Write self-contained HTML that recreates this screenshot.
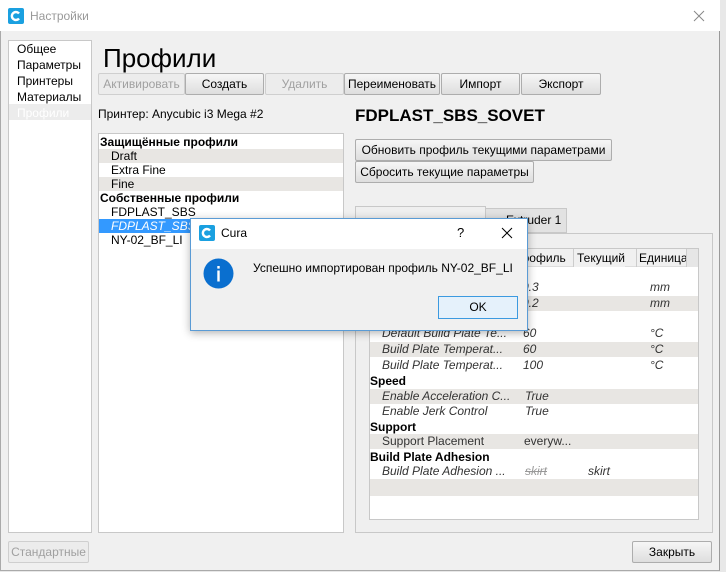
<!DOCTYPE html>
<html><head><meta charset="utf-8"><style>
*{box-sizing:border-box;margin:0;padding:0}
body{width:726px;height:572px;background:#e8e8e8;font-family:"Liberation Sans","DejaVu Sans",sans-serif;font-size:12px;color:#000;position:relative;overflow:hidden}
.a{position:absolute}
.win{left:0;top:0;width:720px;height:571px;background:#f0f0f0;border:1px solid #aaa;border-right:1px solid #999}
.tb{left:0;top:0;width:720px;height:31px;background:#fff}
.btn{position:absolute;height:22px;border:1px solid #adadad;background:linear-gradient(#f6f6f6,#dedede);border-radius:2px;text-align:center;line-height:20px;font-size:12px}
.dis{color:#a0a0a0;border-color:#cfcfcf;background:#ececec}
.row{position:absolute;left:0;width:100%;height:14px;line-height:14px;white-space:nowrap}
.g{background:#e8e6e3}
.it{font-style:italic;color:#333}
.tr{position:absolute;left:0;width:329px;height:15px;line-height:15px;white-space:nowrap}
.tr span{position:absolute}
</style></head><body>
<div class="a win"></div>
<div class="a tb"></div>
<svg class="a" style="left:8px;top:8px" width="16" height="16"><rect width="16" height="16" rx="2" fill="#1aa0e0"/><path d="M11 5.5 A4 4 0 1 0 11 10.5" stroke="#fff" stroke-width="2.4" fill="none"/></svg>
<div class="a" style="left:30px;top:9px;color:#999;font-size:12px">Настройки</div>
<svg class="a" style="left:693px;top:10px" width="12" height="12"><path d="M1 1L11 11M11 1L1 11" stroke="#888" stroke-width="1"/></svg>

<div class="a" style="left:8px;top:40px;width:84px;height:493px;background:#fff;border:1px solid #c8c8c8"></div>
<div class="a" style="left:9px;top:104px;width:82px;height:16px;background:#ececec"></div>
<div class="a" style="left:17px;top:41px;line-height:16px;font-size:12px">Общее<br>Параметры<br>Принтеры<br>Материалы<br><span style="color:#fff">Профили</span></div>

<div class="a" style="left:103px;top:43px;font-size:26px">Профили</div>
<div class="btn dis" style="left:98px;top:73px;width:87px">Активировать</div>
<div class="btn" style="left:185px;top:73px;width:79px">Создать</div>
<div class="btn dis" style="left:265px;top:73px;width:79px">Удалить</div>
<div class="btn" style="left:344px;top:73px;width:96px">Переименовать</div>
<div class="btn" style="left:441px;top:73px;width:79px">Импорт</div>
<div class="btn" style="left:521px;top:73px;width:80px">Экспорт</div>
<div class="a" style="left:98px;top:107px">Принтер: Anycubic i3 Mega #2</div>

<div class="a" style="left:98px;top:133px;width:246px;height:400px;background:#fff;border:1px solid #c8c8c8">
<div class="row" style="top:1px;font-weight:bold;padding-left:1px">Защищённые профили</div>
<div class="row g" style="top:15px;padding-left:12px">Draft</div>
<div class="row" style="top:29px;padding-left:12px">Extra Fine</div>
<div class="row g" style="top:43px;padding-left:12px">Fine</div>
<div class="row" style="top:57px;font-weight:bold;padding-left:1px">Собственные профили</div>
<div class="row" style="top:71px;padding-left:12px">FDPLAST_SBS</div>
<div class="row" style="top:85px;padding-left:12px;background:#3399ff;color:#fff;font-style:italic">FDPLAST_SBS</div>
<div class="row" style="top:99px;padding-left:12px">NY-02_BF_LI</div>
</div>

<div class="a" style="left:355px;top:106px;font-size:17px;font-weight:bold">FDPLAST_SBS_SOVET</div>
<div class="btn" style="left:355px;top:139px;width:257px">Обновить профиль текущими параметрами</div>
<div class="btn" style="left:355px;top:161px;width:179px">Сбросить текущие параметры</div>

<div class="a" style="left:485px;top:208px;width:82px;height:25px;background:#e2e2e2;border:1px solid #c8c8c8;padding-left:20px;line-height:22px">Extruder 1</div>
<div class="a" style="left:355px;top:233px;width:358px;height:300px;background:#efefef;border:1px solid #c8c8c8"></div>
<div class="a" style="left:355px;top:206px;width:131px;height:28px;background:#efefef;border:1px solid #c8c8c8;border-bottom:none"></div>

<div class="a" style="left:369px;top:248px;width:330px;height:272px;background:#fff;border:1px solid #c8c8c8;overflow:hidden">
<div class="a" style="left:0;top:0;width:329px;height:18px;background:#f0f0f0;border-bottom:1px solid #ddd"></div>
<div class="a" style="left:140px;top:0;height:18px;line-height:18px;padding-left:4px">Профиль</div>
<div class="a" style="left:203px;top:0;height:18px;line-height:18px;border-left:1px solid #ccc;padding-left:3px;background:#f0f0f0">Текущий</div>
<div class="a" style="left:266px;top:0;height:18px;line-height:18px;border-left:1px solid #ccc;padding-left:2px;width:50px;overflow:hidden">Единица</div>
<div class="a" style="left:316px;top:0;width:13px;height:18px;border-left:1px solid #ccc;background:#e6e6e6"></div>
<div class="tr it" style="top:31px"><span style="left:152px">0.3</span><span style="left:280px">mm</span></div>
<div class="tr it g" style="top:47px"><span style="left:152px">0.2</span><span style="left:280px">mm</span></div>
<div class="tr it" style="top:77px"><span style="left:12px">Default Build Plate Te...</span><span style="left:153px">60</span><span style="left:280px">°C</span></div>
<div class="tr it g" style="top:93px"><span style="left:12px">Build Plate Temperat...</span><span style="left:153px">60</span><span style="left:280px">°C</span></div>
<div class="tr it" style="top:109px"><span style="left:12px">Build Plate Temperat...</span><span style="left:153px">100</span><span style="left:280px">°C</span></div>
<div class="tr" style="top:125px;font-weight:bold"><span style="left:0">Speed</span></div>
<div class="tr it g" style="top:140px"><span style="left:12px">Enable Acceleration C...</span><span style="left:155px">True</span></div>
<div class="tr it" style="top:155px"><span style="left:12px">Enable Jerk Control</span><span style="left:155px">True</span></div>
<div class="tr" style="top:171px;font-weight:bold"><span style="left:0">Support</span></div>
<div class="tr g" style="top:185px;color:#333"><span style="left:12px">Support Placement</span><span style="left:154px">everyw...</span></div>
<div class="tr" style="top:201px;font-weight:bold"><span style="left:0">Build Plate Adhesion</span></div>
<div class="tr it" style="top:215px"><span style="left:12px">Build Plate Adhesion ...</span><span style="left:155px;color:#999;text-decoration:line-through">skirt</span><span style="left:218px">skirt</span></div>
<div class="tr g" style="top:230px;height:17px"></div>
</div>

<div class="btn dis" style="left:8px;top:541px;width:81px">Стандартные</div>
<div class="btn" style="left:632px;top:541px;width:80px">Закрыть</div>

<div class="a" style="left:190px;top:218px;width:338px;height:113px;background:#f0f0f0;border:1px solid #5a9bd5;box-shadow:0 2px 8px rgba(0,0,0,.3)">
<div class="a" style="left:0;top:0;width:336px;height:30px;background:#fff"></div>
<svg class="a" style="left:8px;top:6px" width="16" height="16"><rect width="16" height="16" rx="2" fill="#1aa0e0"/><path d="M11 5.5 A4 4 0 1 0 11 10.5" stroke="#fff" stroke-width="2.4" fill="none"/></svg>
<div class="a" style="left:30px;top:7px">Cura</div>
<div class="a" style="left:266px;top:6px;font-size:13px">?</div>
<svg class="a" style="left:310px;top:8px" width="12" height="12"><path d="M1 1L11 11M11 1L1 11" stroke="#000" stroke-width="1"/></svg>
<svg class="a" style="left:12px;top:39px" width="31" height="31"><circle cx="15.5" cy="15.5" r="15" fill="#0a6fcf"/><rect x="14.3" y="8" width="2.4" height="2.6" fill="#fff"/><rect x="14.3" y="12.5" width="2.4" height="11" fill="#fff"/></svg>
<div class="a" style="left:62px;top:42px">Успешно импортирован профиль NY-02_BF_LI</div>
<div class="a" style="left:247px;top:77px;width:80px;height:23px;border:1px solid #3c9ae0;background:#e5f1fb;text-align:center;line-height:21px">OK</div>
</div>
</body></html>
